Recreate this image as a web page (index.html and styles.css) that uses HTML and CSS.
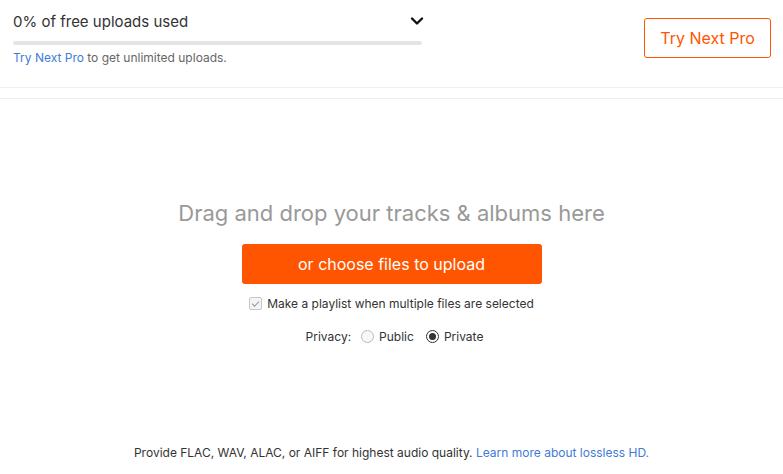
FILE: index.html
```html
<!DOCTYPE html>
<html lang="en">
<head>
  <meta charset="UTF-8" />
  <title>Upload</title>
  <link rel="stylesheet" href="styles.css">
</head>
<body>

  <div class="quota">
    <div class="quota-info">
      <div class="quota-head">
        <span>0% of free uploads used</span>
        <svg class="chevron" width="14" height="10" viewBox="0 0 14 10">
          <path d="M2 2.5 L7 7.5 L12 2.5" fill="none" stroke="#111" stroke-width="2.4" stroke-linecap="round" stroke-linejoin="round"/>
        </svg>
      </div>
      <div class="quota-bar"><div class="quota-fill" style="width:0%"></div></div>
      <p class="quota-note"><a href="#">Try Next Pro</a> to get unlimited uploads.</p>
    </div>
    <button class="btn-outline">Try Next Pro</button>
  </div>
  <div class="divider"></div>

  <div class="dropzone">
    <h2>Drag and drop your tracks &amp; albums here</h2>
    <button class="btn-upload">or choose files to upload</button>

    <label class="option">
      <input type="checkbox" class="check" checked />
      Make a playlist when multiple files are selected
    </label>

    <div class="privacy">
      <span>Privacy:</span>
      <label><input type="radio" class="radio" name="privacy" /> Public</label>
      <label><input type="radio" class="radio" name="privacy" checked /> Private</label>
    </div>
  </div>

  <p class="footer-note">Provide FLAC, WAV, ALAC, or AIFF for highest audio quality. <a href="#">Learn more about lossless HD.</a></p>

</body>
</html>
```

FILE: styles.css
```css
body {
  font-family: Inter, "Noto Sans", sans-serif;
  margin: 0;
  background-color: #fff;
  color: #333;
}

a {
  color: #3f7bd8;
  text-decoration: none;
}

.quota {
  display: flex;
  justify-content: space-between;
  align-items: flex-start;
  padding: 10px 12px 0 13px;
  height: 77px;
  border-bottom: 1px solid #f0f0f0;
}

.quota-info {
  width: 409px;
}

.quota-head {
  display: flex;
  justify-content: space-between;
  align-items: center;
  font-size: 15px;
  color: #333;
  height: 22px;
}

.chevron {
  margin-right: -2px;
}

.quota-bar {
  margin-top: 9px;
  height: 4px;
  border-radius: 2px;
  background-color: #e5e5e5;
}

.quota-fill {
  height: 100%;
  background-color: #f50;
}

.quota-note {
  margin: 5px 0 0;
  font-size: 12px;
  color: #666;
}

.btn-outline {
  margin-top: 8px;
  width: 127px;
  height: 40px;
  font-family: inherit;
  font-size: 16px;
  color: #f50;
  background: #fff;
  border: 1px solid #f50;
  border-radius: 3px;
  cursor: pointer;
}

.divider {
  margin-top: 10px;
  border-top: 1px solid #f0f0f0;
}

.dropzone {
  display: flex;
  flex-direction: column;
  align-items: center;
  padding-top: 101px;
}

.dropzone h2 {
  margin: 0;
  font-size: 22px;
  font-weight: 400;
  color: #999;
}

.btn-upload {
  margin-top: 18px;
  width: 300px;
  height: 40px;
  font-family: inherit;
  font-size: 16px;
  color: #fff;
  background-color: #f50;
  border: none;
  border-radius: 3px;
  cursor: pointer;
}

.option {
  margin-top: 12px;
  display: flex;
  align-items: center;
  gap: 5px;
  font-size: 12px;
  color: #333;
}

.check,
.radio {
  appearance: none;
  margin: 0;
  width: 13px;
  height: 13px;
  border: 1px solid #c8c8c8;
  background: #fff;
  display: grid;
  place-items: center;
}

.check {
  border-radius: 2px;
  background: #f4f4f4;
}

.check:checked::after {
  content: "";
  width: 6px;
  height: 3px;
  margin-top: -2px;
  border-left: 1.5px solid #999;
  border-bottom: 1.5px solid #999;
  transform: rotate(-45deg);
}

.radio {
  border-radius: 50%;
  border-color: #bbb;
  background: #f7f7f7;
}

.radio:checked {
  border-color: #333;
  background: #fff;
}

.radio:checked::after {
  content: "";
  width: 7px;
  height: 7px;
  border-radius: 50%;
  background: #333;
}

.privacy {
  margin-top: 18px;
  padding-left: 6px;
  display: flex;
  align-items: center;
  gap: 12px;
  font-size: 12px;
  color: #333;
}

.privacy span {
  margin-right: -2px;
}

.privacy label {
  display: flex;
  align-items: center;
  gap: 5px;
}

.footer-note {
  margin: 101px 0 0;
  text-align: center;
  font-size: 12px;
  color: #333;
}
```
